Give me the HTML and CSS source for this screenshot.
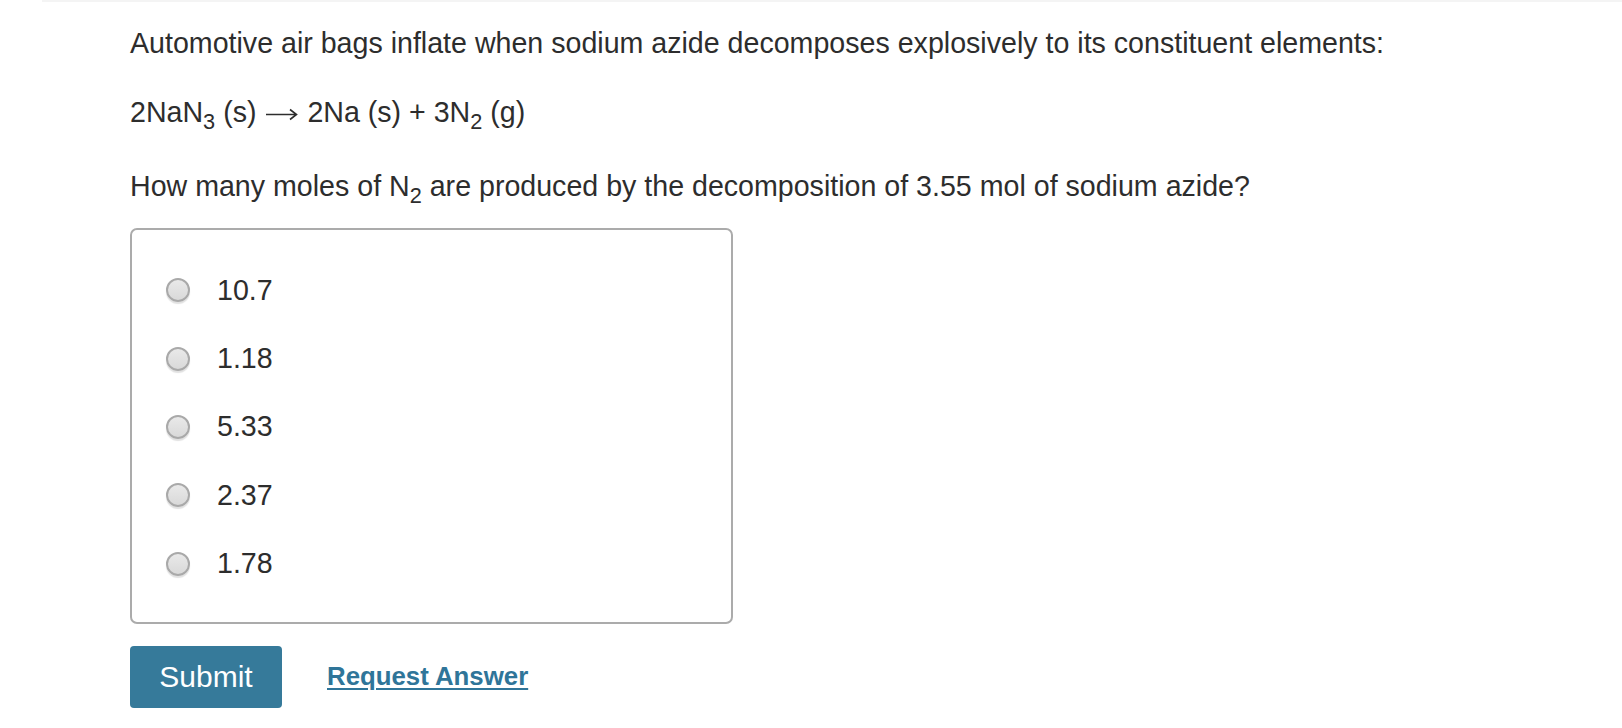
FILE: index.html
```html
<!DOCTYPE html>
<html lang="en">
<head>
<meta charset="utf-8">
<title>Question</title>
<link rel="stylesheet" href="styles.css">
</head>
<body>
<div class="topbar"></div>
<main class="content">
  <p class="para">Automotive air bags inflate when sodium azide decomposes explosively to its constituent elements:</p>
  <p class="para eq">2NaN<sub class="sub">3</sub> (s) <svg class="arrow" width="33" height="14" viewBox="0 0 33 14"><path d="M1 7.5H31.5M25 2.5L31.5 7.5L25 12.5" fill="none" stroke="#2d2d2d" stroke-width="1.6"/></svg> 2Na (s) + 3N<sub class="sub">2</sub> (g)</p>
  <p class="para q">How many moles of N<sub class="sub">2</sub> are produced by the decomposition of 3.55 mol of sodium azide?</p>
  <div class="choices">
    <label class="choice"><span class="radio"></span><span class="label">10.7</span></label>
    <label class="choice"><span class="radio"></span><span class="label">1.18</span></label>
    <label class="choice"><span class="radio"></span><span class="label">5.33</span></label>
    <label class="choice"><span class="radio"></span><span class="label">2.37</span></label>
    <label class="choice"><span class="radio"></span><span class="label">1.78</span></label>
  </div>
  <div class="actions">
    <button class="submit">Submit</button>
    <a class="request" href="#">Request Answer</a>
  </div>
</main>
</body>
</html>
```
FILE: styles.css
```css
html, body {
  margin: 0;
  padding: 0;
  background: #ffffff;
}
body {
  font-family: "Liberation Sans", Arial, Helvetica, sans-serif;
  color: #2d2d2d;
}
.topbar {
  height: 2px;
  margin-left: 42px;
  background: #f4f4f4;
}
.content {
  padding: 21px 0 0 130px;
}
.para {
  margin: 0;
  font-size: 28.6px;
  line-height: 40px;
  white-space: nowrap;
}
.eq {
  margin-top: 29px;
}
.q {
  margin-top: 34px;
}
.sub {
  font-size: 0.76em;
  line-height: 0;
  vertical-align: -0.3em;
}
.arrow {
  vertical-align: 1px;
  margin: 0 1px;
}
.choices {
  box-sizing: border-box;
  width: 603px;
  margin-top: 22px;
  border: 2px solid #ababab;
  border-radius: 7px;
  padding: 26px 0 24px 0;
}
.choice {
  display: flex;
  align-items: center;
  height: 68.4px;
  padding-left: 34px;
}
.radio {
  box-sizing: border-box;
  width: 24px;
  height: 24px;
  border-radius: 50%;
  border: 2px solid #a9a9a9;
  background: linear-gradient(#e9e9e9, #d9d9d9);
  box-shadow: 0 2px 1px rgba(0, 0, 0, 0.12);
  flex: none;
}
.label {
  margin-left: 27px;
  font-size: 28.6px;
}
.actions {
  display: flex;
  align-items: center;
  margin-top: 22px;
}
.submit {
  width: 152px;
  height: 62px;
  border: none;
  border-radius: 4px;
  background: #367a9a;
  color: #ffffff;
  font-family: "Liberation Sans", Arial, Helvetica, sans-serif;
  font-size: 30px;
  padding: 0;
}
.request {
  margin-left: 45px;
  font-size: 25.8px;
  font-weight: bold;
  color: #2f7599;
  text-decoration: underline;
  text-underline-offset: 3px;
  text-decoration-thickness: 2px;
}
```
